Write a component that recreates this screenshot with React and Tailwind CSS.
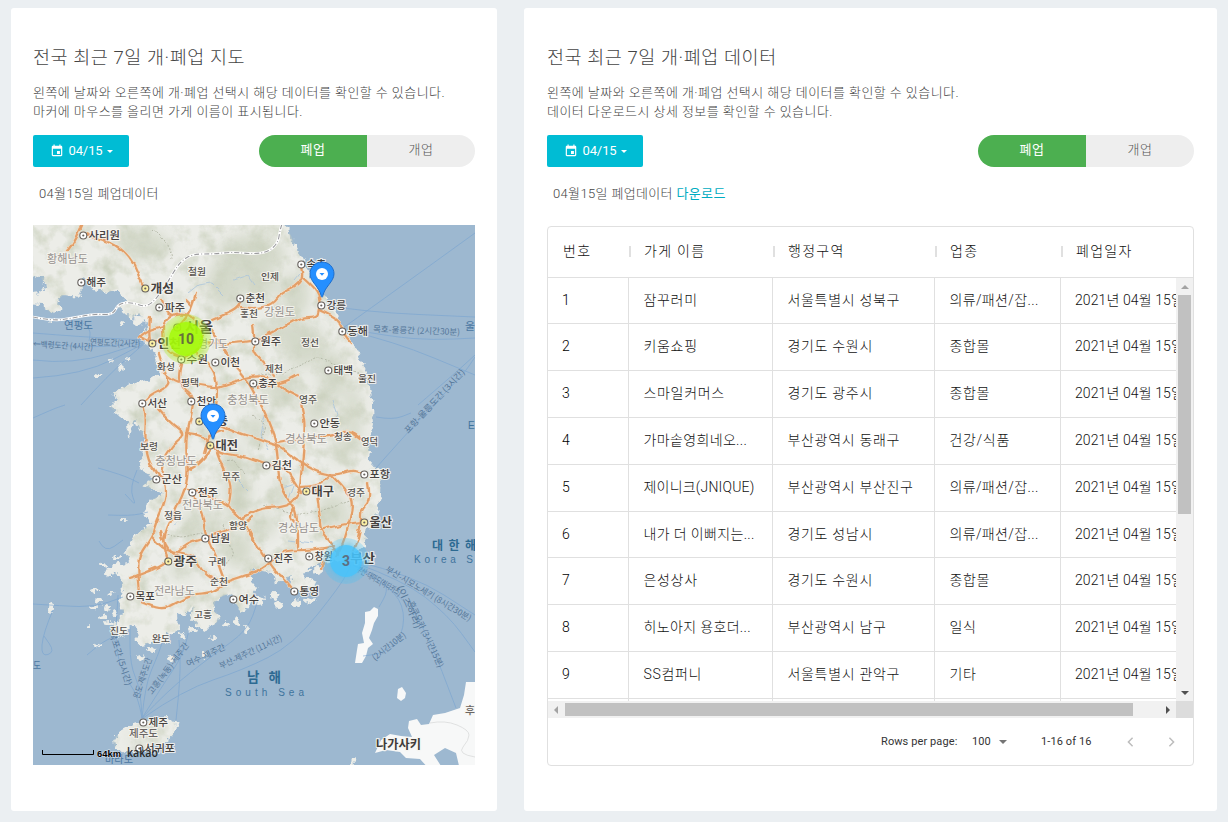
import React from "react";

const COAST = [[-10,-10],[253,-10],[254,2],[262,20],[273,43],[287,63],[297,80],[310,103],[320,117],[328,133],[335,150],[338,167],[340,180],[341,200],[337,217],[335,233],[343,243],[348,247],[347,270],[342,297],[333,307],[332,320],[320,330],[308,336],[298,337],[287,338],[276,343],[270,350],[276,358],[270,366],[262,368],[256,362],[260,350],[250,356],[243,360],[240,347],[228,346],[220,343],[216,352],[224,362],[213,384],[208,388],[203,378],[197,368],[188,372],[182,377],[180,385],[188,392],[182,400],[173,405],[163,400],[157,393],[160,380],[152,390],[145,388],[146,406],[133,408],[137,418],[126,416],[115,419],[105,420],[104,403],[97,400],[90,413],[78,407],[80,400],[91,388],[85,377],[90,366],[88,352],[72,343],[86,338],[97,337],[92,327],[100,312],[118,299],[110,288],[118,275],[131,268],[109,261],[120,253],[112,248],[106,240],[110,230],[113,215],[106,205],[102,195],[96,212],[95,196],[88,192],[77,182],[85,174],[80,167],[96,160],[118,154],[128,148],[121,138],[124,128],[112,120],[106,112],[114,104],[112,96],[104,88],[98,94],[84,82],[94,76],[84,64],[74,68],[60,64],[57,57],[45,53],[50,62],[47,72],[30,70],[24,76],[28,84],[18,88],[8,80],[-10,79],[-10,70],[8,68],[14,60],[8,53],[-10,52]];
const JEJU = [[80,516],[86,507],[97,501],[113,496],[133,493],[142,498],[141,509],[130,518],[113,524],[90,528],[82,523]];
const JAPAN = [[433,457],[431,470],[427,483],[412,488],[400,490],[396,499],[388,500],[384,494],[376,496],[375,503],[379,512],[368,511],[357,509],[348,515],[342,528],[353,525],[367,527],[373,533],[387,534],[397,545],[408,541],[401,530],[412,523],[423,528],[427,545],[450,545],[450,457]];
const TSUSHIMA = [[341,382],[345,384],[345,391],[341,398],[339,405],[336,413],[340,419],[335,423],[333,431],[329,438],[322,438],[324,425],[325,419],[331,418],[329,408],[332,398],[332,387],[337,386]];
const ISLANDS = [[62,366,3,2],[66,376,4,3],[73,382,3,4],[78,370,3,2],[60,383,4,2],[70,392,4,3],[76,398,5,2],[82,388,3,2],[18,383,3,4],[55,402,3,2],[66,421,4,2],[100,392,2,3],[108,433,4,3],[119,425,4,2],[138,433,3,3],[149,410,4,3],[160,405,5,3],[171,430,2,3],[180,413,2,2],[193,399,3,2],[205,398,3,4],[213,404,2,3],[246,380,4,3],[262,378,5,4],[278,375,6,3],[242,371,4,5],[225,375,6,4],[285,345,4,5],[275,358,8,4],[76,348,5,3],[84,332,4,2],[90,295,3,1],[70,340,4,2],[78,135,2,2],[87,142,4,3],[95,134,3,2],[66,150,4,2],[100,84,6,4],[105,96,6,5],[20,96,3,1],[90,98,3,2],[143,498,1.5,2],[320,541,2,8]];
const ROADS = [
[[49,-2],[42,15],[34,26]],[[50,8],[62,13],[75,16],[90,25],[102,40],[107,55],[112,63]],
[[163,68],[160,78],[155,90],[144,102]],[[153,75],[158,80]],[[129,75],[132,85],[140,90]],
[[130,100],[135,92],[145,88],[158,90],[168,100],[170,118],[160,131],[145,132],[133,125],[130,110],[130,100]],
[[117,92],[116,105],[117,117]],[[106,113],[112,106],[130,101]],[[107,112],[119,118],[131,116]],
[[180,95],[192,90],[205,83],[208,75]],[[208,82],[220,84],[240,80],[248,68],[262,62],[270,53],[268,41]],
[[270,53],[280,62],[287,72],[286,85],[284,92],[268,92],[255,99],[240,108],[222,116],[200,118],[185,119],[169,118]],
[[286,85],[302,92],[308,100],[312,112],[318,118]],
[[126,128],[131,145],[138,160],[120,168],[109,177],[113,190],[112,215],[115,235],[123,248],[133,258],[133,275],[122,300],[119,312],[106,330],[105,345],[107,368]],
[[150,132],[146,145],[146,160],[160,170],[160,182],[157,195],[154,208],[153,225],[155,245],[153,262],[145,280],[138,295],[131,310],[132,325],[135,336]],
[[154,208],[168,210],[177,217],[185,228],[205,230],[222,236]],
[[184,228],[190,245],[198,258],[197,275],[194,282],[210,295],[217,308],[224,322]],
[[125,183],[138,198],[154,209],[140,220],[130,235],[128,252]],[[177,225],[168,237],[155,245]],[[171,228],[175,210],[190,205]],
[[131,148],[140,155],[150,158],[170,160],[183,163],[200,157],[212,153],[222,151],[238,152],[248,163],[266,172]],
[[163,128],[178,140],[184,155],[184,175],[182,190],[176,212]],
[[177,104],[184,112],[195,130],[205,145],[216,158],[222,170],[230,183],[238,202],[243,218],[245,235],[246,258],[255,275],[262,283],[265,300],[265,322]],
[[220,100],[222,116],[220,126],[232,138],[240,150]],[[268,178],[270,188],[272,200],[270,230],[268,250],[267,265],[260,278],[245,283],[228,283],[210,292]],
[[187,200],[205,208],[220,212],[235,218],[248,222],[256,229],[268,238],[285,247],[298,250],[310,248],[320,245],[331,249]],
[[298,250],[310,262],[320,275],[317,295],[310,320],[303,332]],[[267,262],[285,262],[298,250]],[[220,234],[235,240],[252,243],[260,255],[268,268]],
[[245,218],[280,212],[300,211],[315,205],[327,214]],[[335,258],[338,275],[328,285],[328,297],[325,315],[318,330]],
[[283,262],[287,290],[287,305],[300,320],[305,330]],[[287,305],[305,300],[328,297]],
[[217,310],[230,328],[240,345],[250,352],[258,362]],[[192,357],[215,350],[232,342],[245,328],[260,325],[280,325],[302,321]],[[262,283],[256,290],[262,298]],[[288,344],[290,332],[302,325]],
[[119,312],[130,325],[145,327],[160,330],[168,345],[180,355],[195,357]],[[145,327],[155,318],[170,314],[185,308],[205,302],[220,292]],
[[158,267],[170,285],[173,310],[182,330],[190,352]],[[97,353],[120,345],[135,336]],[[108,377],[120,382],[132,384],[145,377],[160,369],[178,368],[190,360]],[[155,264],[190,275],[210,295]],[[128,306],[132,322],[145,332]],[[225,163],[250,158],[265,150]]
];
const FERRIES = [
[[0,108],[50,112],[112,115]],[[0,118],[60,124],[112,116]],[[0,135],[40,140],[112,117]],[[0,153],[50,150],[112,118]],[[48,180],[75,150],[112,118]],[[50,98],[58,104],[56,116]],
[[292,80],[330,87],[442,92]],[[310,103],[370,60],[442,8]],[[316,104],[360,112],[400,115],[442,113]],[[316,106],[360,116],[442,150]],[[343,243],[390,190],[430,150],[442,132]],[[343,192],[360,195],[378,188]],[[385,180],[420,150],[442,130]],
[[109,493],[105,470],[90,450],[82,420],[85,370]],[[109,493],[108,465],[97,440],[97,400]],[[109,493],[112,460],[125,430],[130,415]],[[109,493],[130,460],[150,430],[156,405]],[[109,493],[135,465],[180,430],[215,405],[225,375]],[[110,493],[150,465],[210,445],[260,420],[308,360],[318,340]],[[143,495],[148,450],[146,415]],
[[320,340],[352,358],[371,380],[370,410],[352,428],[330,431]],[[320,340],[350,352],[355,366],[346,382]],[[322,340],[370,370],[395,410],[423,483]],[[322,338],[370,355],[415,390],[442,427]],[[322,336],[380,350],[442,390]],
[[0,379],[30,381],[62,382],[90,372]],[[20,385],[10,408],[8,432],[22,427],[11,411]],[[65,243],[90,250],[106,258]],[[104,245],[96,263],[104,282],[92,269]],[[66,316],[72,328],[90,315]],[[75,290],[98,291],[115,287]],[[0,193],[20,184],[32,180]],[[54,430],[68,418],[80,412]]
];
const BORDER = [[0,92],[20,96],[40,93],[60,89],[80,90],[85,79],[98,77],[115,83],[130,65],[140,48],[148,36],[160,29],[180,29],[200,27],[220,29],[235,27],[245,18],[247,5],[250,-4]];
const HILLS = [[218,30,34,20],[190,60,16,24],[262,70,14,22],[225,60,20,12],[270,120,22,22],[250,105,24,10],[300,150,14,24],[250,165,18,16],[320,190,8,30],[285,185,14,12],[222,205,12,14],[200,240,12,18],[205,270,12,30],[205,325,14,18],[232,300,10,12],[310,225,12,12],[300,285,14,16],[320,300,8,8],[160,300,10,14],[120,225,10,8],[180,300,8,16],[110,20,26,14],[148,345,12,8],[250,270,10,12],[112,512,16,5]];

// [name, marker x, marker y, text right edge, size, capital, text left edge]
const CITIES = [
["사리원",50,10,87,10.5],["해주",48,57,73,10.5],["개성",112,63,141,12,1],["파주",126,82,152,10.5],["서울",144,102,180,14,1,152],["인천",119,118,148,12,1],["수원",148,134,175,10.5],["이천",182,137,207,10.5],["춘천",207,73,232,10.5],["서산",109,178,134,10.5],["천안",158,176,183,10.5],["속초",268,39,293,10.5],["강릉",288,80,313,10.5],["동해",309,106,335,10.5],["원주",222,116,248,10.5],["태백",295,145,320,10.5],["충주",220,158,244,10.5],["세종",166,196,195,11,1],["대전",177,220,205,12,1],["군산",123,254,149,10.5],["전주",159,267,185,10.5],["남원",172,313,197,10.5],["광주",135,336,164,12,1],["안동",281,198,307,10.5],["김천",233,240,259,10.5],["포항",331,249,357,10.5],["대구",273,266,301,12,1],["울산",331,297,359,12,1],["진주",235,333,260,10.5],["창원",276,331,300,10.5],["목포",97,371,122,10.5],["여수",200,374,226,10.5],["통영",261,366,286,10.5],["제주",110,497,135,10.5],["서귀포",106,523,142,10.5]
];
// [name, left, centre y, right, kind]
const PLACES = [
["철원",155,46,173,"t"],["홍천",207,88,225,"t"],["화성",124,141,142,"t"],["평택",148,157,166,"t"],["인제",228,51,246,"t"],["정선",268,117,286,"t"],["울진",325,153,343,"t"],["제천",232,143,250,"t"],["영주",266,174,284,"t"],["보령",107,221,125,"t"],["무주",189,251,207,"t"],["정읍",131,290,149,"t"],["함양",196,300,214,"t"],["구례",175,336,193,"t"],["순천",177,356,195,"t"],["청송",301,211,319,"t"],["영덕",328,216,345,"t"],["경주",314,267,332,"t"],["고흥",161,389,179,"t"],["진도",77,405,95,"t"],["완도",119,413,137,"t"],
["황해남도",14,34,55,"p"],["경기도",165,119,195,"p"],["충청북도",194,175,236,"p"],["강원도",231,87,262,"p"],["충청남도",122,236,164,"p"],["전라북도",149,280,190,"p"],["경상북도",252,214,294,"p"],["경상남도",245,303,286,"p"],["전라남도",121,366,162,"p"],["제주도",96,508,125,"d"],
["연평도",31,100,60,"s"],["마라도",72,534,100,"s"],["도",0,440,8,"s"],["부산",317,333,342,"b"],["나가사키",343,519,388,"b"],["후",432,485,442,"d"],["울",432,101,442,"s"]
];
const KIND = {
  t: { size: 9.5, fill: "#55514e", weight: 500 },
  p: { size: 11, fill: "#96918e", weight: 400 },
  d: { size: 10.5, fill: "#6a6664", weight: 500 },
  s: { size: 10.5, fill: "#4b77a2", weight: 400, bare: true },
  b: { size: 12, fill: "#3f3b39", weight: 600 },
};
const ROUTES = [
["←백령도간 (4시간)",0,122,60,3],["연평도간(2시간)",57,120,50,2],["목호-울릉간 (2시간30분)",340,107,87,2],["포항-울릉도간 (3시간)",375,209,84,-47],["여수-제주간",155,442,42,-25],["부산-제주간 (11시간)",188,444,68,-25],["고흥(녹동)-제주간",119,470,62,-53],["목포간 (5시간)",76,408,56,72],["완도-제주도간",106,474,42,-72],["부산-대마도(히타카츠)",323,346,50,30],["부산-시모노세키 (8시간30분)",352,346,98,31],["후쿠오카 (3시간15분)",375,378,72,65],["(이즈하라)",364,362,46,66],["(2시간10분)",342,436,40,-38]
];

function smooth(points) {
  let d = `M${points[0][0]} ${points[0][1]}`;
  for (let i = 1; i < points.length - 1; i++) {
    const [x, y] = points[i];
    const [nx, ny] = points[i + 1];
    d += `Q${x} ${y} ${(x + nx) / 2} ${(y + ny) / 2}`;
  }
  const last = points[points.length - 1];
  return d + `L${last[0]} ${last[1]}`;
}
const polygon = (points) => "M" + points.map((p) => p.join(" ")).join("L") + "Z";

function Label({ x, right, y, size, fill, weight, bare, children }) {
  return (
    <text x={x} y={y + 0.3 + size * 0.36} fontSize={size} fill={fill} fontWeight={weight} textLength={right - x} lengthAdjust="spacingAndGlyphs"
      stroke={bare ? "none" : "#f6f5f0"} strokeWidth={bare ? 0 : 2.2} strokeOpacity="0.85" paintOrder="stroke" strokeLinejoin="round">
      {children}
    </text>
  );
}

function KoreaMap() {
  return (
    <svg viewBox="0 0 442 540" className="block h-[540px] w-[442px] font-['Noto_Sans_CJK_KR',sans-serif]">
      <defs>
        <filter id="rough" x="-5%" y="-5%" width="110%" height="110%">
          <feTurbulence type="fractalNoise" baseFrequency="0.16" numOctaves="3" seed="4" />
          <feDisplacementMap in="SourceGraphic" scale="9" xChannelSelector="R" yChannelSelector="G" />
        </filter>
        <filter id="wobble" x="-10%" y="-10%" width="120%" height="120%">
          <feTurbulence type="fractalNoise" baseFrequency="0.09" numOctaves="2" seed="9" />
          <feDisplacementMap in="SourceGraphic" scale="5" xChannelSelector="R" yChannelSelector="G" />
        </filter>
        <filter id="soft" x="-50%" y="-50%" width="200%" height="200%">
          <feGaussianBlur stdDeviation="7" />
        </filter>
        <filter id="relief" x="0" y="0" width="100%" height="100%">
          <feTurbulence type="fractalNoise" baseFrequency="0.06" numOctaves="4" seed="12" />
          <feColorMatrix values="0 0 0 0 0.60  0 0 0 0 0.64  0 0 0 0 0.52  2.2 0 0 0 -0.95" />
        </filter>
        <clipPath id="land">
          <path d={polygon(COAST)} />
          <path d={polygon(JEJU)} />
        </clipPath>
      </defs>
      <rect width="442" height="540" fill="#9db8d0" />
      <g filter="url(#rough)" fill="#ecede8">
        <path d={polygon(COAST)} />
        <path d={polygon(JEJU)} />
        {ISLANDS.map(([x, y, rx, ry], i) => <ellipse key={i} cx={x} cy={y} rx={rx} ry={ry} />)}
      </g>
      <g fill="#f7f8f8">
        <path d={polygon(JAPAN)} />
        <path d={polygon(TSUSHIMA)} />
        <path d="M365 464L369 462L373 468L372 473L368 476L364 473Z" />
      </g>
      <g clipPath="url(#land)">
        <g filter="url(#soft)" fill="#bbc4ab" opacity="0.5">
          {HILLS.map(([x, y, rx, ry], i) => <ellipse key={i} cx={x} cy={y} rx={rx} ry={ry} />)}
        </g>
        <rect width="442" height="540" filter="url(#relief)" opacity="0.9" />
      </g>
      <g fill="none" stroke="#77a3d0" strokeWidth="0.8" opacity="0.75">
        {FERRIES.map((f, i) => <path key={i} d={smooth(f)} />)}
      </g>
      <path d="M397 498Q412 495 424 500T436 510T430 522T442 532" fill="none" stroke="#d9dada" strokeWidth="0.8" />
      <g fill="none" stroke="#a9c4dc" strokeWidth="0.8" filter="url(#wobble)">
        <path d="M155 68L165 60L178 58L190 70M200 55L215 50L222 60M232 190L228 210L236 225M250 262L262 258L256 275M300 175L305 190L296 200M205 255L215 265M140 300L150 292M255 315L280 318M270 45L262 55" />
      </g>
      <path d={smooth(BORDER)} fill="none" stroke="#fff" strokeWidth="2.6" />
      <path d={smooth(BORDER)} fill="none" stroke="#9c9c9f" strokeWidth="1.1" strokeDasharray="5 2 1 2" />
      <g fill="none" stroke="#a6aa98" strokeWidth="0.7" strokeDasharray="2 1.5" filter="url(#wobble)">
        <path d="M120 5L135 20L138 35M225 150L250 148L285 132L330 150M185 240L200 235L212 248M230 280L262 290L290 285L320 275M220 190L232 200L225 225M130 310L150 312L170 308M190 300L200 330L190 345" />
      </g>
      <g filter="url(#wobble)" fill="none" strokeLinejoin="round" strokeLinecap="round">
        <g stroke="#f5dfc8" strokeWidth="3.2">{ROADS.map((r, i) => <path key={i} d={smooth(r)} />)}</g>
        <g stroke="#e39f68" strokeWidth="2.2">{ROADS.map((r, i) => <path key={i} d={smooth(r)} />)}</g>
      </g>
      <g fontSize="8.5" fill="#557799">
        {ROUTES.map(([name, x, y, w, a], i) => (
          <text key={i} x={x} y={y} textLength={w} lengthAdjust="spacingAndGlyphs" transform={`rotate(${a} ${x} ${y})`}>{name}</text>
        ))}
      </g>
      {PLACES.map(([name, x, y, right, kind]) => <Label key={name + x} x={x} y={y} right={right} {...KIND[kind]}>{name}</Label>)}
      {CITIES.map(([name, x, y, right, size, capital, left]) => (
        <g key={name}>
          <circle cx={x + 0.3} cy={y + 0.5} r="3.5" fill={capital ? "#fbf0a4" : "#fff"} stroke="#66615d" strokeWidth="1.1" />
          <circle cx={x + 0.3} cy={y + 0.5} r="1.100" fill="#66615d" />
          <Label x={left || x + 5.5} y={y} right={right} size={size} fill="#45413f" weight={capital ? 600 : 500}>{name}</Label>
        </g>
      ))}
      <g fill="#2d6a92">
        <text x="214" y="457" fontSize="13.5" fontWeight="600" textLength="34">남 해</text>
        <text x="399" y="325" fontSize="12" fontWeight="600" textLength="44">대 한 해</text>
        <g fill="#3f749d" fontSize="10" className="font-['Liberation_Sans',sans-serif]">
          <text x="192" y="471" textLength="79">South Sea</text>
          <text x="381" y="338" textLength="59">Korea S</text>
          <text x="435" y="204">E</text>
        </g>
      </g>
      <path d="M9.5 525V529.5H60.5V525" fill="none" stroke="#000" />
      <text x="64" y="532" fontSize="8.5" fontWeight="700" textLength="24" lengthAdjust="spacingAndGlyphs" stroke="#fff" strokeOpacity="0.6" strokeWidth="1" paintOrder="stroke" className="font-['Liberation_Sans',sans-serif]">64km</text>
      <text x="94" y="532" fontSize="12" fontWeight="600" fill="#2b2b2b" textLength="31" lengthAdjust="spacingAndGlyphs" className="font-['Open_Sans',sans-serif]">kakao</text>
    </svg>
  );
}

function Pin({ className }) {
  return (
    <svg viewBox="0 0 26 38" className={`absolute h-[38px] w-[26px] ${className}`}>
      <path d="M13 1C6.200 1 1 6.200 1 12.800C1 21 10.500 25.500 12.300 35.500Q13 37 13.700 35.500C15.500 25.500 25 21 25 12.800C25 6.200 19.800 1 13 1Z" fill="#258fff" stroke="#1668c8" strokeWidth="0.9" />
      <circle cx="13" cy="13" r="6" fill="#fff" />
      <path d="M10.500 12H15.500L13 14.800Z" fill="#258fff" />
    </svg>
  );
}

function DateButton() {
  return (
    <button className="flex h-8 w-24 items-center rounded-[2px] bg-[#00bcd4] pl-[17px] font-['Roboto',sans-serif] text-[13px] text-white">
      <svg viewBox="0 0 24 24" className="h-[14px] w-[14px]" fill="currentColor"><path d="M17 12h-5v5h5v-5zM16 1v2H8V1H6v2H5c-1.110 0-1.990.9-1.990 2L3 19c0 1.100.89 2 2 2h14c1.100 0 2-.9 2-2V5c0-1.100-.9-2-2-2h-1V1h-2zm3 18H5V8h14v11z" /></svg>
      <span className="ml-1 w-[35px] tracking-[-0.1px]">04/15</span>
      <span className="mt-px ml-[4px] border-x-[3.5px] border-t-[3.5px] border-x-transparent border-t-white" />
    </button>
  );
}

function Toggle() {
  return (
    <div className="flex h-8 w-[216px] overflow-hidden rounded-full text-[13px] leading-[29px] tracking-[0.6px]">
      <button className="w-1/2 bg-[#4caf50] pb-[3px] text-white">폐업</button>
      <button className="w-1/2 bg-[#eee] pb-[3px] font-light text-[#555]">개업</button>
    </div>
  );
}

function Panel({ title, hint, caption, className, children }) {
  return (
    <section className={`h-[803px] rounded-[3px] bg-white pt-[38px] ${className}`}>
      <h2 className="h-[24px] text-[18.500px] leading-[24px] font-light tracking-[0.570px] whitespace-nowrap text-[#444]">{title}</h2>
      <p className="mt-[13px] text-[13px] leading-[19px] font-light tracking-[0.450px] whitespace-nowrap text-[#444]">
        왼쪽에 날짜와 오른쪽에 개·폐업 선택시 해당 데이터를 확인할 수 있습니다.<br />{hint}
      </p>
      <div className="mt-[14px] flex justify-between"><DateButton /><Toggle /></div>
      <p className="mt-[17px] h-5 pl-1.5 text-[13px] leading-5 font-light tracking-[0.350px] text-[#444]">{caption}</p>
      {children}
    </section>
  );
}

const ROWS = [
["잠꾸러미","서울특별시 성북구","의류/패션/잡..."],["키움쇼핑","경기도 수원시","종합몰"],["스마일커머스","경기도 광주시","종합몰"],["가마솥영희네오...","부산광역시 동래구","건강/식품"],["제이니크(JNIQUE)","부산광역시 부산진구","의류/패션/잡..."],["내가 더 이뻐지는...","경기도 성남시","의류/패션/잡..."],["은성상사","경기도 수원시","종합몰"],["히노아지 용호더...","부산광역시 남구","일식"],["SS컴퍼니","서울특별시 관악구","기타"]
];
const GRID = "grid grid-cols-[81px_144px_162px_126px_133px]";
const CELL = "overflow-hidden border-r border-[#e0e0e0] pl-[15px] whitespace-nowrap";
const TEXT_CELL = "overflow-hidden border-r border-[#e0e0e0] pl-[14.500px] whitespace-nowrap";

function spacing(text) {
  if (/[A-Z]{3}/.test(text)) return "tracking-[0.2px]";
  return /\.\.\./.test(text) ? "tracking-[0.350px]" : "tracking-[0.680px]";
}

function DataTable() {
  return (
    <div className="mt-[22px] h-[540px] overflow-hidden rounded-[4px] border border-[#e0e0e0] text-[14px] text-[#111]">
      <div className={`${GRID} h-[51px] items-center border-b border-[#e0e0e0] pb-[2px] font-light tracking-[1.300px]`}>
        {["번호", "가게 이름", "행정구역", "업종", "폐업일자"].map((h, i) => (
          <div key={h} className="flex items-center justify-between pl-[15px] whitespace-nowrap">
            {h}
            {i < 4 && <span className="-mr-[2px] h-[11px] w-[2px] bg-[#e0e0e0]" />}
          </div>
        ))}
      </div>
      <div className="flex h-[423px]">
        <div className="w-[628px] overflow-hidden">
          {ROWS.map((r, i) => (
            <div key={i} className={`${GRID} border-b border-[#e0e0e0] font-light ${i === 0 || i === 5 ? "h-[46px] leading-[44px]" : "h-[47px] leading-[45px]"}`}>
              <div className="border-r border-[#e0e0e0] pl-[14px] text-black">{i + 1}</div>
              {r.map((text, j) => <div key={j} className={`${TEXT_CELL} ${spacing(text)}`}>{text}</div>)}
              <div className="pl-[14px] tracking-[0.1px] whitespace-nowrap">2021년 04월 15일</div>
            </div>
          ))}
          <div className={`${GRID} h-[47px]`}>
            {[0, 1, 2, 3].map((i) => <div key={i} className={CELL} />)}
          </div>
        </div>
        <div className="flex w-[17px] flex-col items-center justify-between bg-[#f1f1f1] pt-[7px] pb-[6px]">
          <span className="border-x-4 border-b-4 border-x-transparent border-b-[#a3a3a3]" />
          <span className="mt-[6px] h-[219px] w-[13px] bg-[#c1c1c1]" />
          <span className="mt-auto border-x-4 border-t-4 border-x-transparent border-t-[#505050]" />
        </div>
      </div>
      <div className="flex h-[17px] items-center bg-[#f1f1f1]">
        <span className="ml-1.5 border-y-4 border-r-4 border-y-transparent border-r-[#a3a3a3]" />
        <span className="ml-[7px] h-[13px] w-[568px] bg-[#c1c1c1]" />
        <span className="ml-[33px] border-y-4 border-l-4 border-y-transparent border-l-[#505050]" />
        <span className="ml-auto h-[17px] w-[17px] bg-[#dcdcdc]" />
      </div>
      <div className="flex h-[47px] items-center pt-px pl-[333px] font-['Roboto',sans-serif] text-[11px] tracking-[0.1px] whitespace-nowrap text-[#333]">
        <span className="w-[91px]">Rows per page:</span>
        <span className="w-[27px]">100</span>
        <span className="border-x-[4px] border-t-[4px] border-x-transparent border-t-[#757575]" />
        <span className="ml-[34px] w-[86px]">1-16 of 16</span>
        <svg viewBox="0 0 8 12" className="h-[10px] w-[7px]" fill="none" stroke="#bdbdbd" strokeWidth="1.800"><path d="M6.500 1L1.500 6L6.500 11" /></svg>
        <svg viewBox="0 0 8 12" className="ml-[34px] h-[10px] w-[7px]" fill="none" stroke="#bdbdbd" strokeWidth="1.800"><path d="M1.500 1L6.500 6L1.500 11" /></svg>
      </div>
    </div>
  );
}

export default function App() {
  return (
    <main className="flex h-[822px] w-[1228px] gap-[27px] overflow-hidden bg-[#ebeff2] pt-2 pl-[11px] font-['Roboto','Noto_Sans_CJK_KR',sans-serif]">
      <Panel className="w-[486px] pr-[22px] pl-[22px]" title="전국 최근 7일 개·폐업 지도" hint="마커에 마우스를 올리면 가게 이름이 표시됩니다." caption="04월15일 폐업데이터">
        <div className="relative mt-[21px] h-[540px] w-[442px] overflow-hidden">
          <KoreaMap />
          <div className="absolute top-[89px] left-[128px] h-[50px] w-[50px] rounded-full bg-[#b5f02f]/35 p-2">
            <div className="flex h-[34px] w-[34px] items-center justify-center rounded-full bg-[#a4fa08]/90 pt-px font-['Roboto',sans-serif] text-[14px] font-bold text-[#66703c] shadow-[0_0_5px_2px_rgba(164,250,8,0.5)]">10</div>
          </div>
          <div className="absolute top-[313px] left-[290px] h-[46px] w-[46px] rounded-full bg-[#51c4f5]/30 p-[7px]">
            <div className="flex h-8 w-8 items-center justify-center rounded-full bg-[#45c3fb]/85 pt-px font-['Roboto',sans-serif] text-[14px] font-bold text-[#5d6f80] shadow-[0_0_4px_1px_rgba(69,195,251,0.5)]">3</div>
          </div>
          <Pin className="top-[36px] left-[276px]" />
          <Pin className="top-[178px] left-[167px]" />
        </div>
      </Panel>
      <Panel className="w-[693px] pr-[23px] pl-[23px]" title="전국 최근 7일 개·폐업 데이터" hint="데이터 다운로드시 상세 정보를 확인할 수 있습니다." caption={<>04월15일 폐업데이터 <a className="font-normal text-[#00acc1]">다운로드</a></>}>
        <DataTable />
      </Panel>
    </main>
  );
}
